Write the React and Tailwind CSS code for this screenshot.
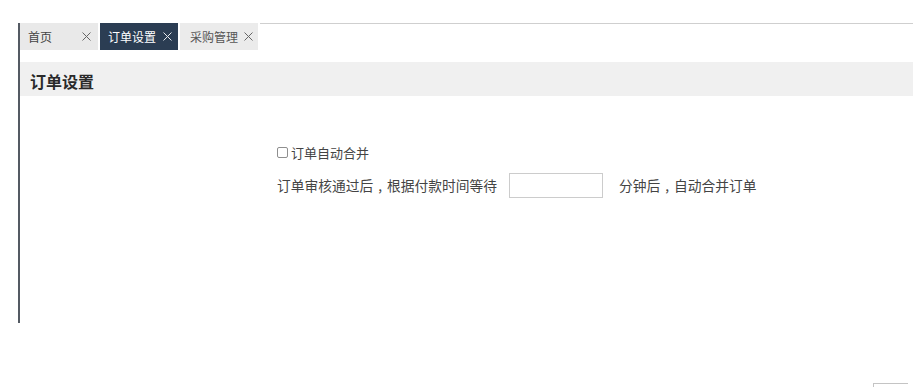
import React from "react";

function X({ className }) {
  return (
    <svg width="9" height="9" viewBox="0 0 9 9" className={className}>
      <path d="M0.5 0.5 L8.5 8.5 M8.5 0.5 L0.5 8.5" stroke="currentColor" strokeWidth="1" fill="none" />
    </svg>
  );
}

function Comma() {
  return <span className="inline-block w-[1em] text-center">,</span>;
}

export default function App() {
  return (
    <div
      className="h-[387px] w-[922px] overflow-hidden bg-white text-[#333]"
      style={{ fontFamily: '"Noto Sans CJK SC", "Noto Sans", sans-serif' }}
    >
      <div className="pt-[23px] pl-[18px] pr-[9px]">
        <div className="h-[300px] border-l-2 border-[#545a63]">
          <div className="flex h-[27px] gap-[2px]">
            <div className="flex w-[78px] items-center justify-between bg-[#e9e9e9] pl-[8px] pr-[7px] text-[12px] leading-none text-[#444]">
              <span>首页</span>
              <X className="text-[#666]" />
            </div>
            <div className="flex w-[78px] items-center gap-[7px] bg-[#2b3d53] pl-[8px] text-[12px] leading-none text-white">
              <span>订单设置</span>
              <X className="text-[#e5e8ec]" />
            </div>
            <div className="flex w-[78px] items-center gap-[6px] bg-[#ebebeb] pl-[10px] text-[12px] leading-none text-[#555]">
              <span>采购管理</span>
              <X className="text-[#666]" />
            </div>
            <div className="flex-1 border-t border-[#cfcfcf]" />
          </div>
          <div className="mt-[12px] flex h-[34px] items-center bg-[#f0f0f0] pl-[10px] pt-[4px] text-[16px] font-bold leading-none text-[#2a2a2a]">
            订单设置
          </div>
          <div className="pl-[257px] pt-[46px]">
            <div className="flex h-[20px] items-center text-[13px] leading-none text-[#444]">
              <span className="mr-[3px] inline-block h-[11px] w-[11px] rounded-[2px] border border-[#8f8f8f] bg-white" />
              <span>订单自动合并</span>
            </div>
            <div className="mt-[11px] flex h-[25px] items-center text-[13.75px] leading-none text-[#444]">
              <span>
                订单审核通过后<Comma />根据付款时间等待
              </span>
              <input
                type="text"
                className="ml-[12px] h-[25px] w-[94px] border border-[#cccccc] bg-white outline-none"
              />
              <span className="ml-[16px]">
                分钟后<Comma />自动合并订单
              </span>
            </div>
          </div>
        </div>
        <div className="mt-[60px] flex justify-end pr-[5px]">
          <div className="h-[20px] w-[35px] border-l border-t border-[#c4c4c4]" />
        </div>
      </div>
    </div>
  );
}
